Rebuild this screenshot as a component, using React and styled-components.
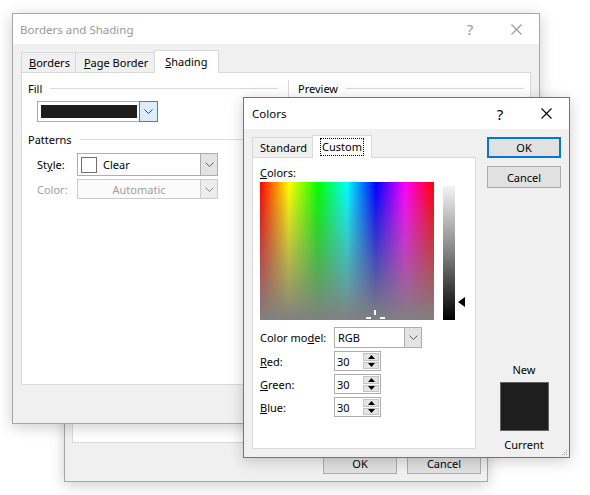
import React from "react";
import styled, { createGlobalStyle } from "styled-components";

const GlobalStyle = createGlobalStyle`
  html, body {
    margin: 0;
    padding: 0;
    background: #fff;
  }
  body {
    font-family: "Noto Sans", "Open Sans", sans-serif;
    font-size: 11px;
    color: #000;
  }
`;

const Desktop = styled.div`
  position: relative;
  width: 590px;
  height: 495px;
  overflow: hidden;
  background: #fff;
`;

// windows sit on a free canvas, so they are placed by coordinates
const Window = styled.div`
  position: absolute;
  left: ${(p) => p.$x}px;
  top: ${(p) => p.$y}px;
  width: ${(p) => p.$w}px;
  height: ${(p) => p.$h}px;
  box-sizing: border-box;
  border: 1px solid ${(p) => p.$border || "#a6a6a6"};
  background: #f0f0f0;
  display: flex;
  flex-direction: column;
  box-shadow: 0 3px 14px rgba(0, 0, 0, 0.2);
`;

const TitleBar = styled.div`
  flex: none;
  height: ${(p) => p.$h}px;
  background: #fff;
  display: flex;
  align-items: center;
  padding-left: ${(p) => p.$pad}px;
  font-size: 11.5px;
`;

const Title = styled.div`
  flex: 1;
  color: ${(p) => (p.$inactive ? "#999" : "#000")};
`;

const CaptionButton = styled.div`
  width: 46px;
  height: 100%;
  display: flex;
  align-items: center;
  justify-content: center;
  font-size: 15px;
  color: ${(p) => (p.$inactive ? "#9a9a9a" : "#000")};
`;

const Body = styled.div`
  flex: 1;
  display: flex;
  flex-direction: ${(p) => p.$dir || "column"};
  padding: ${(p) => p.$pad};
  min-height: 0;
`;

const TabRow = styled.div`
  display: flex;
  align-items: flex-end;
  height: 22px;
  flex: none;
`;

const Tab = styled.div`
  position: relative;
  z-index: ${(p) => (p.$active ? 2 : 1)};
  box-sizing: border-box;
  height: ${(p) => (p.$active ? 23 : 20)}px;
  margin-bottom: ${(p) => (p.$active ? -1 : 0)}px;
  margin-right: -1px;
  padding: 0 ${(p) => p.$padR || 6}px 0 ${(p) => p.$padL || 6}px;
  border: 1px solid #d9d9d9;
  border-bottom: none;
  background: ${(p) => (p.$active ? "#fff" : "#f0f0f0")};
  display: flex;
  align-items: center;
  padding-bottom: ${(p) => (p.$active ? 1 : 0)}px;
`;

const FocusText = styled.span`
  outline: 1px dotted #000;
  outline-offset: 1px;
  line-height: 14px;
`;

const TabPanel = styled.div`
  box-sizing: border-box;
  height: ${(p) => p.$h}px;
  width: ${(p) => (p.$w ? `${p.$w}px` : "auto")};
  flex: none;
  background: #fff;
  border: 1px solid #d9d9d9;
`;

/* ---------- Borders and Shading ---------- */

const ShadingGrid = styled.div`
  display: grid;
  grid-template-columns: 266px 1fr;
  height: 100%;
`;

const LeftColumn = styled.div`
  padding: 7px 10px 0 6px;
  display: flex;
  flex-direction: column;
  align-items: flex-start;
`;

const RightColumn = styled.div`
  margin-top: 7px;
  border-left: 1px solid #d9d9d9;
  padding: 0 6px 0 9px;
`;

const GroupHeader = styled.div`
  align-self: stretch;
  height: 16px;
  display: flex;
  align-items: center;
  gap: 8px;
  margin-top: ${(p) => p.$mt || 0}px;
  &::after {
    content: "";
    flex: 1;
    height: 1px;
    background: #dcdcdc;
  }
`;

const Combo = styled.div`
  box-sizing: border-box;
  width: ${(p) => p.$w}px;
  height: ${(p) => p.$h}px;
  flex: none;
  border: 1px solid ${(p) => (p.$disabled ? "#cccccc" : "#adadad")};
  background: ${(p) => (p.$disabled ? "#fbfbfb" : "#fff")};
  display: flex;
  align-items: stretch;
  margin-left: ${(p) => p.$ml || 0}px;
  margin-top: ${(p) => p.$mt || 0}px;
`;

const ComboValue = styled.div`
  flex: 1;
  display: flex;
  align-items: center;
  justify-content: ${(p) => (p.$center ? "center" : "flex-start")};
  gap: 6px;
  padding-left: ${(p) => p.$pl ?? 3}px;
  color: ${(p) => (p.$disabled ? "#a0a0a0" : "#000")};
`;

const FillSwatch = styled.div`
  width: 96px;
  margin: 3px 2px 3px 3px;
  background: #1e1e1e;
`;

const PatternSwatch = styled.div`
  box-sizing: border-box;
  width: 16px;
  height: 16px;
  border: 1px solid #707070;
  background: #fff;
`;

const DropButton = styled.div`
  box-sizing: border-box;
  width: ${(p) => (p.$hot ? 19 : 17)}px;
  flex: none;
  display: flex;
  align-items: center;
  justify-content: center;
  background: ${(p) => (p.$hot ? "#dbecfa" : p.$disabled ? "#ececec" : "#e3e3e3")};
  border-left: 1px solid ${(p) => (p.$disabled ? "#cccccc" : "#adadad")};
  ${(p) =>
    p.$hot &&
    `
    border: 1px solid #2e87d8;
    margin: -1px -1px -1px 0;
  `}
`;

const FieldRow = styled.div`
  display: flex;
  align-items: center;
  margin-top: ${(p) => p.$mt || 0}px;
  margin-left: ${(p) => p.$ml || 0}px;
`;

const FieldLabel = styled.div`
  width: ${(p) => p.$w}px;
  flex: none;
  color: ${(p) => (p.$disabled ? "#a0a0a0" : "#000")};
`;

/* ---------- Back dialog ---------- */

const WhitePanel = styled.div`
  flex: 1;
  margin: 0 7px;
  background: #fff;
  border: 1px solid #d9d9d9;
`;

const Footer = styled.div`
  flex: none;
  height: 38px;
  box-sizing: border-box;
  display: flex;
  justify-content: flex-end;
  align-items: flex-end;
  gap: 10px;
  padding: 0 6px 7px;
`;

const Button = styled.div`
  box-sizing: border-box;
  width: 74px;
  height: ${(p) => p.$h || 21}px;
  flex: none;
  display: flex;
  align-items: center;
  justify-content: center;
  background: #e1e1e1;
  border: ${(p) => (p.$default ? "2px solid #0078d7" : "1px solid #adadad")};
  margin-top: ${(p) => p.$mt || 0}px;
`;

/* ---------- Colors dialog ---------- */

const ColorsLeft = styled.div`
  display: flex;
  flex-direction: column;
`;

const ColorsRight = styled.div`
  width: 74px;
  margin-left: 11px;
  padding-top: 2px;
  padding-bottom: 4px;
  display: flex;
  flex-direction: column;
  align-items: center;
`;

const Spacer = styled.div`
  flex: 1;
`;

const CustomPane = styled.div`
  padding: 7px 0 0 7px;
  display: flex;
  flex-direction: column;
`;

const PickerRow = styled.div`
  display: flex;
  align-items: flex-start;
  margin-top: 2px;
`;

const Spectrum = styled.div`
  position: relative;
  width: 174px;
  height: 138px;
  flex: none;
  background: linear-gradient(to bottom, rgba(128, 128, 128, 0), rgb(128, 128, 128)),
    linear-gradient(
      to right,
      #ff0000 0%,
      #ffff00 16.66%,
      #00ff00 33.33%,
      #00ffff 50%,
      #0000ff 66.66%,
      #ff00ff 83.33%,
      #ff0000 100%
    );
`;

const CrossTick = styled.span`
  position: absolute;
  background: #fff;
  left: ${(p) => p.$x}px;
  top: ${(p) => p.$y}px;
  width: ${(p) => p.$w}px;
  height: ${(p) => p.$h}px;
`;

const LumBar = styled.div`
  width: 12px;
  height: 134px;
  margin: 4px 0 0 9px;
  flex: none;
  background: linear-gradient(to bottom, #f4f4f4, #808080 50%, #000);
`;

const LumArrow = styled.div`
  margin: 115px 0 0 3px;
  display: flex;
`;

const SpinBox = styled.div`
  box-sizing: border-box;
  width: 47px;
  height: 20px;
  border: 1px solid #adadad;
  background: #fff;
  display: flex;
  align-items: center;
  padding: 1px 1px 1px 2px;
`;

const SpinText = styled.div`
  flex: 1;
`;

const SpinButtons = styled.div`
  width: 16px;
  align-self: stretch;
  display: flex;
  flex-direction: column;
  gap: 1px;
`;

const SpinHalf = styled.div`
  flex: 1;
  box-sizing: border-box;
  background: #e5e5e5;
  border: 1px solid #c4c4c4;
  display: flex;
  align-items: center;
  justify-content: center;
`;

const SwatchLabel = styled.div`
  height: 16px;
  line-height: 16px;
`;

const ColorSwatch = styled.div`
  box-sizing: border-box;
  width: 49px;
  height: 49px;
  margin: 4px 0 6px;
  background: #1e1e1e;
  border: 1px solid #646464;
`;

const Grip = styled.div`
  position: absolute;
  right: 1px;
  bottom: 1px;
  display: flex;
`;

const Chevron = ({ color = "#606060" }) => (
  <svg width="9" height="5" viewBox="0 0 9 5">
    <polyline points="0.5,0.5 4.5,4.5 8.5,0.5" fill="none" stroke={color} strokeWidth="1" />
  </svg>
);

const CloseGlyph = ({ color }) => (
  <svg width="11" height="11" viewBox="0 0 11 11">
    <path d="M0.5 0.5 L10.5 10.5 M10.5 0.5 L0.5 10.5" stroke={color} strokeWidth="1.1" />
  </svg>
);

const Caption = ({ inactive }) => (
  <>
    <CaptionButton $inactive={inactive}>?</CaptionButton>
    <CaptionButton $inactive={inactive}>
      <CloseGlyph color={inactive ? "#9a9a9a" : "#000"} />
    </CaptionButton>
  </>
);

const Spinner = ({ value }) => (
  <SpinBox>
    <SpinText>{value}</SpinText>
    <SpinButtons>
      <SpinHalf>
        <svg width="7" height="4" viewBox="0 0 7 4">
          <polygon points="0,4 7,4 3.5,0" fill="#000" />
        </svg>
      </SpinHalf>
      <SpinHalf>
        <svg width="7" height="4" viewBox="0 0 7 4">
          <polygon points="0,0 7,0 3.5,4" fill="#000" />
        </svg>
      </SpinHalf>
    </SpinButtons>
  </SpinBox>
);

function BackDialog() {
  return (
    <Window $x={64} $y={60} $w={424} $h={422}>
      <TitleBar $h={30} $pad={7} />
      <WhitePanel />
      <Footer>
        <Button>OK</Button>
        <Button>Cancel</Button>
      </Footer>
    </Window>
  );
}

function BordersDialog() {
  return (
    <Window $x={12} $y={13} $w={528} $h={411}>
      <TitleBar $h={30} $pad={7}>
        <Title $inactive>Borders and Shading</Title>
        <Caption inactive />
      </TitleBar>
      <Body $pad="6px 8px 0">
        <TabRow>
          <Tab $padL={7} $padR={5}>
            <u>B</u>orders
          </Tab>
          <Tab $padL={8} $padR={6}>
            <u>P</u>age Border
          </Tab>
          <Tab $active $padL={10} $padR={11}>
            <u>S</u>hading
          </Tab>
        </TabRow>
        <TabPanel $h={313}>
          <ShadingGrid>
            <LeftColumn>
              <GroupHeader>Fill</GroupHeader>
              <Combo $w={121} $h={21} $ml={9} $mt={5}>
                <FillSwatch />
                <DropButton $hot>
                  <Chevron color="#404040" />
                </DropButton>
              </Combo>
              <GroupHeader $mt={9}>Patterns</GroupHeader>
              <FieldRow $mt={6} $ml={9}>
                <FieldLabel $w={40}>
                  St<u>y</u>le:
                </FieldLabel>
                <Combo $w={141} $h={23}>
                  <ComboValue>
                    <PatternSwatch />
                    Clear
                  </ComboValue>
                  <DropButton>
                    <Chevron />
                  </DropButton>
                </Combo>
              </FieldRow>
              <FieldRow $mt={3} $ml={9}>
                <FieldLabel $w={40} $disabled>
                  Color:
                </FieldLabel>
                <Combo $w={141} $h={20} $disabled>
                  <ComboValue $center $disabled $pl={0}>
                    Automatic
                  </ComboValue>
                  <DropButton $disabled>
                    <Chevron color="#888" />
                  </DropButton>
                </Combo>
              </FieldRow>
            </LeftColumn>
            <RightColumn>
              <GroupHeader>Preview</GroupHeader>
            </RightColumn>
          </ShadingGrid>
        </TabPanel>
      </Body>
    </Window>
  );
}

function ColorsDialog() {
  return (
    <Window $x={243} $y={97} $w={327} $h={361} $border="#2b86d6">
      <TitleBar $h={31} $pad={8}>
        <Title>Colors</Title>
        <Caption />
      </TitleBar>
      <Body $dir="row" $pad="6px 7px 0 8px">
        <ColorsLeft>
          <TabRow>
            <Tab $padL={7} $padR={5}>Standard</Tab>
            <Tab $active $padL={9} $padR={9}>
              <FocusText>Custom</FocusText>
            </Tab>
          </TabRow>
          <TabPanel $h={292} $w={224}>
            <CustomPane>
              <div>
                <u>C</u>olors:
              </div>
              <PickerRow>
                <Spectrum>
                  <CrossTick $x={114} $y={128} $w={2} $h={5} />
                  <CrossTick $x={106} $y={135} $w={5} $h={2} />
                  <CrossTick $x={120} $y={135} $w={5} $h={2} />
                </Spectrum>
                <LumBar />
                <LumArrow>
                  <svg width="7" height="10" viewBox="0 0 7 10">
                    <polygon points="7,0 7,10 0,5" fill="#000" />
                  </svg>
                </LumArrow>
              </PickerRow>
              <FieldRow $mt={7}>
                <FieldLabel $w={74}>
                  Color mo<u>d</u>el:
                </FieldLabel>
                <Combo $w={88} $h={21}>
                  <ComboValue>RGB</ComboValue>
                  <DropButton>
                    <Chevron />
                  </DropButton>
                </Combo>
              </FieldRow>
              <FieldRow $mt={3}>
                <FieldLabel $w={74}>
                  <u>R</u>ed:
                </FieldLabel>
                <Spinner value="30" />
              </FieldRow>
              <FieldRow $mt={3}>
                <FieldLabel $w={74}>
                  <u>G</u>reen:
                </FieldLabel>
                <Spinner value="30" />
              </FieldRow>
              <FieldRow $mt={3}>
                <FieldLabel $w={74}>
                  <u>B</u>lue:
                </FieldLabel>
                <Spinner value="30" />
              </FieldRow>
            </CustomPane>
          </TabPanel>
        </ColorsLeft>
        <ColorsRight>
          <Button $default>OK</Button>
          <Button $mt={8} $h={22}>
            Cancel
          </Button>
          <Spacer />
          <SwatchLabel>New</SwatchLabel>
          <ColorSwatch />
          <SwatchLabel>Current</SwatchLabel>
        </ColorsRight>
      </Body>
      <Grip>
        <svg width="7" height="7" viewBox="0 0 7 7">
          <rect x="5" y="1" width="1" height="1" fill="#a0a0a0" />
          <rect x="3" y="3" width="1" height="1" fill="#a0a0a0" />
          <rect x="5" y="3" width="1" height="1" fill="#a0a0a0" />
          <rect x="1" y="5" width="1" height="1" fill="#a0a0a0" />
          <rect x="3" y="5" width="1" height="1" fill="#a0a0a0" />
          <rect x="5" y="5" width="1" height="1" fill="#a0a0a0" />
        </svg>
      </Grip>
    </Window>
  );
}

export default function App() {
  return (
    <>
      <GlobalStyle />
      <Desktop>
        <BackDialog />
        <BordersDialog />
        <ColorsDialog />
      </Desktop>
    </>
  );
}
